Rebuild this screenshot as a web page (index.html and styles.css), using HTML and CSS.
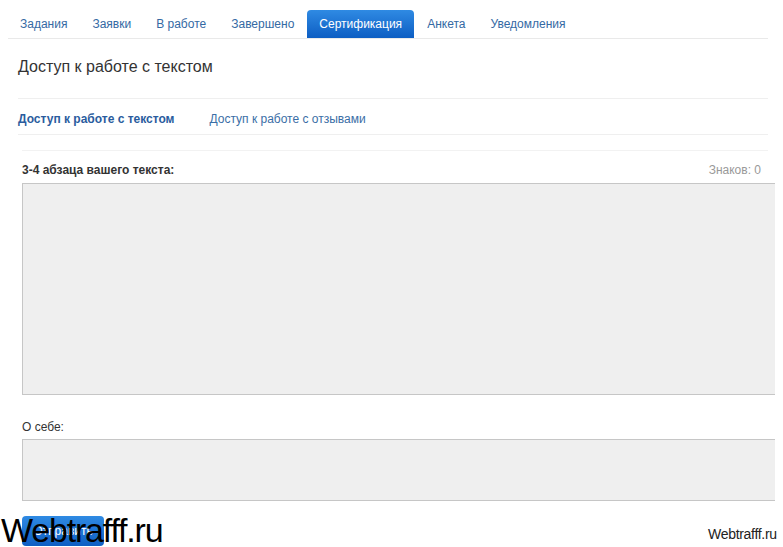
FILE: index.html
```html
<!DOCTYPE html>
<html lang="ru">
  <head>
    <meta charset="UTF-8" />
    <meta name="viewport" content="width=device-width, initial-scale=1.0" />
    <title>Сертификация</title>
    <link rel="stylesheet" href="styles.css">
  </head>
  <body>
    <div class="container">
      <!-- Main tabs -->
      <ul class="nav-tabs">
        <li><a href="#">Задания</a></li>
        <li><a href="#">Заявки</a></li>
        <li><a href="#">В работе</a></li>
        <li><a href="#">Завершено</a></li>
        <li class="active"><a href="#">Сертификация</a></li>
        <li><a href="#">Анкета</a></li>
        <li><a href="#">Уведомления</a></li>
      </ul>

      <div class="content">
        <h2 class="page-title">Доступ к работе с текстом</h2>

        <!-- Sub tabs -->
        <ul class="sub-tabs">
          <li class="active"><a href="#">Доступ к работе с текстом</a></li>
          <li><a href="#">Доступ к работе с отзывами</a></li>
        </ul>

        <form class="cert-form">
          <div class="field-head">
            <label class="label-bold">3-4 абзаца вашего текста:</label>
            <span class="counter">Знаков: 0</span>
          </div>
          <textarea class="text-big"></textarea>

          <div class="field-head field-about">
            <label>О себе:</label>
          </div>
          <textarea class="text-small"></textarea>

          <button type="submit" class="btn">Отправить</button>
        </form>
      </div>
    </div>

    <div class="mark-big">Webtrafff.ru</div>
    <div class="mark-small">Webtrafff.ru</div>
  </body>
</html>
```

FILE: styles.css
```css
body {
  margin: 8px;
  font-family: "Liberation Sans", Arial, sans-serif;
  font-size: 12px;
  color: #333;
  background: #fff;
  overflow: hidden;
}
.container {
  width: 760px;
}
a {
  text-decoration: none;
}

/* main tabs */
.nav-tabs {
  display: flex;
  list-style: none;
  margin: 2px 0 0;
  padding: 0;
  border-bottom: 1px solid #e9e9e9;
}
.nav-tabs li {
  margin-right: 1px;
}
.nav-tabs a {
  display: block;
  padding: 0 12px;
  line-height: 28px;
  font-size: 12px;
  color: #3469a3;
  border-radius: 4px 4px 0 0;
}
.nav-tabs .active a {
  color: #fff;
  background: linear-gradient(#2f8ae3, #0d5ec3);
}

.content {
  padding-left: 10px;
}
.page-title {
  margin: 0;
  padding: 18px 0 21px;
  font-size: 16px;
  font-weight: normal;
  line-height: 20px;
  color: #333;
  border-bottom: 1px solid #efefef;
}

/* sub tabs */
.sub-tabs {
  display: flex;
  list-style: none;
  margin: 0;
  padding: 12px 0 7px;
  border-bottom: 1px solid #efefef;
}
.sub-tabs li {
  margin-right: 35px;
}
.sub-tabs a {
  font-size: 12px;
  line-height: 16px;
  color: #3a6ea6;
}
.sub-tabs .active a {
  font-weight: bold;
  color: #2a5c9e;
}

/* form */
.cert-form {
  margin: 15px 0 0 4px;
  border-top: 1px solid #f2f2f2;
}
.field-head {
  display: flex;
  justify-content: space-between;
  padding: 11px 0 0;
  line-height: 16px;
  margin-bottom: 5px;
}
.field-about {
  padding-top: 24px;
  margin-bottom: 4px;
}
.label-bold {
  font-weight: bold;
}
.counter {
  color: #999;
  margin-right: 7px;
}
textarea {
  display: block;
  box-sizing: border-box;
  width: 754px;
  margin: 0;
  background: #efefef;
  border: 1px solid #c6c6c6;
  resize: none;
}
.text-big {
  height: 212px;
}
.text-small {
  height: 62px;
}
.btn {
  display: block;
  margin-top: 15px;
  width: 82px;
  height: 30px;
  border: none;
  border-radius: 4px;
  background: linear-gradient(#2f8ae3, #0d5ec3);
  color: #fff;
  font-family: "Liberation Sans", Arial, sans-serif;
  font-size: 12px;
}

/* watermarks */
.mark-big {
  position: absolute;
  left: 1px;
  top: 510px;
  font-family: "Liberation Sans", Arial, sans-serif;
  font-size: 34px;
  letter-spacing: -1.2px;
  color: #000;
  line-height: 40px;
}
.mark-small {
  position: absolute;
  left: 708px;
  top: 526px;
  font-family: "Liberation Sans", Arial, sans-serif;
  font-size: 14px;
  letter-spacing: -0.3px;
  color: #222;
}
```
